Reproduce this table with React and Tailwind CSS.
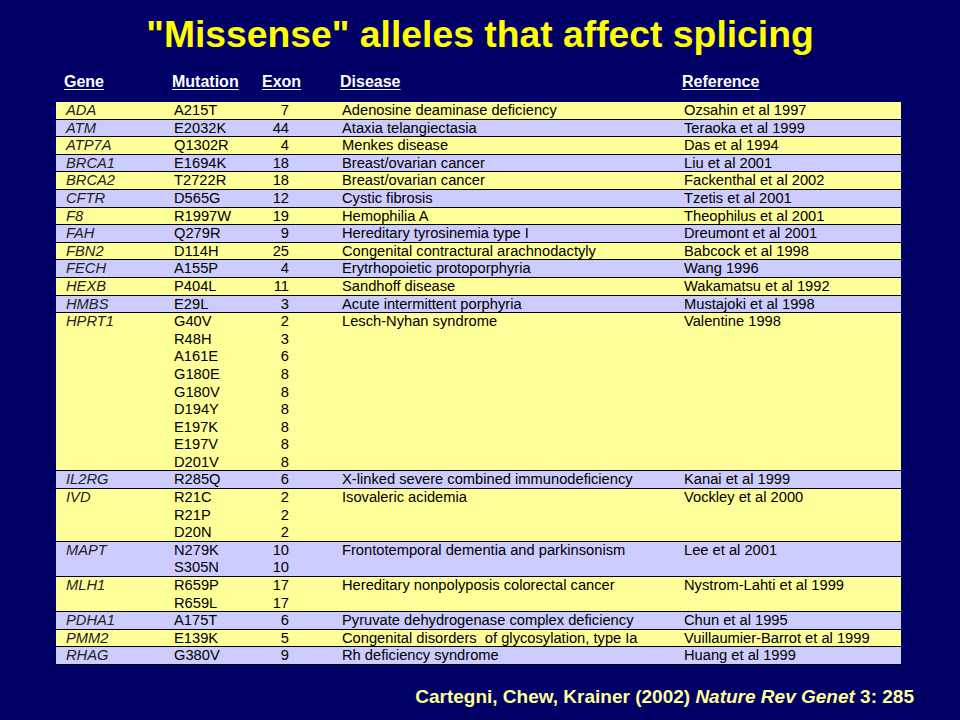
const rows = [
  { gene: 'ADA', muts: [['A215T', '7']], disease: 'Adenosine deaminase deficiency', ref: 'Ozsahin et al 1997' },
  { gene: 'ATM', muts: [['E2032K', '44']], disease: 'Ataxia telangiectasia', ref: 'Teraoka et al 1999' },
  { gene: 'ATP7A', muts: [['Q1302R', '4']], disease: 'Menkes disease', ref: 'Das et al 1994' },
  { gene: 'BRCA1', muts: [['E1694K', '18']], disease: 'Breast/ovarian cancer', ref: 'Liu et al 2001' },
  { gene: 'BRCA2', muts: [['T2722R', '18']], disease: 'Breast/ovarian cancer', ref: 'Fackenthal et al 2002' },
  { gene: 'CFTR', muts: [['D565G', '12']], disease: 'Cystic fibrosis', ref: 'Tzetis et al 2001' },
  { gene: 'F8', muts: [['R1997W', '19']], disease: 'Hemophilia A', ref: 'Theophilus et al 2001' },
  { gene: 'FAH', muts: [['Q279R', '9']], disease: 'Hereditary tyrosinemia type I', ref: 'Dreumont et al 2001' },
  { gene: 'FBN2', muts: [['D114H', '25']], disease: 'Congenital contractural arachnodactyly', ref: 'Babcock et al 1998' },
  { gene: 'FECH', muts: [['A155P', '4']], disease: 'Erytrhopoietic protoporphyria', ref: 'Wang 1996' },
  { gene: 'HEXB', muts: [['P404L', '11']], disease: 'Sandhoff disease', ref: 'Wakamatsu et al 1992' },
  { gene: 'HMBS', muts: [['E29L', '3']], disease: 'Acute intermittent porphyria', ref: 'Mustajoki et al 1998' },
  {
    gene: 'HPRT1',
    muts: [
      ['G40V', '2'],
      ['R48H', '3'],
      ['A161E', '6'],
      ['G180E', '8'],
      ['G180V', '8'],
      ['D194Y', '8'],
      ['E197K', '8'],
      ['E197V', '8'],
      ['D201V', '8'],
    ],
    disease: 'Lesch-Nyhan syndrome',
    ref: 'Valentine 1998',
  },
  { gene: 'IL2RG', muts: [['R285Q', '6']], disease: 'X-linked severe combined immunodeficiency', ref: 'Kanai et al 1999' },
  {
    gene: 'IVD',
    muts: [
      ['R21C', '2'],
      ['R21P', '2'],
      ['D20N', '2'],
    ],
    disease: 'Isovaleric acidemia',
    ref: 'Vockley et al 2000',
  },
  {
    gene: 'MAPT',
    muts: [
      ['N279K', '10'],
      ['S305N', '10'],
    ],
    disease: 'Frontotemporal dementia and parkinsonism',
    ref: 'Lee et al 2001',
  },
  {
    gene: 'MLH1',
    muts: [
      ['R659P', '17'],
      ['R659L', '17'],
    ],
    disease: 'Hereditary nonpolyposis colorectal cancer',
    ref: 'Nystrom-Lahti et al 1999',
  },
  { gene: 'PDHA1', muts: [['A175T', '6']], disease: 'Pyruvate dehydrogenase complex deficiency', ref: 'Chun et al 1995' },
  { gene: 'PMM2', muts: [['E139K', '5']], disease: 'Congenital disorders  of glycosylation, type Ia', ref: 'Vuillaumier-Barrot et al 1999' },
  { gene: 'RHAG', muts: [['G380V', '9']], disease: 'Rh deficiency syndrome', ref: 'Huang et al 1999' },
];

export default function App() {
  return (
    <div className="w-[960px] h-[720px] bg-[#000066] font-['Liberation_Sans',Arial,sans-serif] overflow-hidden">
      <h1 className="pt-[16px] text-center text-[37.3px] leading-[37px] font-bold text-[#ffff00]">
        "Missense" alleles that affect splicing
      </h1>

      {/* column headings sit on the navy, a touch left of the body text */}
      <div className="mt-[20px] ml-[64px] grid grid-cols-[108px_90px_78px_342px_1fr] text-[16px] leading-[18px] font-bold text-white">
        <span className="underline underline-offset-2">Gene</span>
        <span className="underline underline-offset-2">Mutation</span>
        <span className="underline underline-offset-2">Exon</span>
        <span className="underline underline-offset-2">Disease</span>
        <span className="underline underline-offset-2">Reference</span>
      </div>

      <div className="mt-[11px] ml-[56px] w-[845px] text-[14.7px] leading-[17.6px] text-black">
        {rows.map((r, i) => (
          <div
            key={r.gene}
            className={`grid grid-cols-[118px_75px_40px_395px_217px] shadow-[inset_0_-1px_0_#000] ${
              i % 2 === 0 ? 'bg-[#ffff99]' : 'bg-[#ccccff]'
            }`}
          >
            <span className="pl-[10px] italic text-[#222]">{r.gene}</span>
            <div>
              {r.muts.map(([m]) => (
                <div key={m}>{m}</div>
              ))}
            </div>
            <div className="text-right">
              {r.muts.map(([m, e]) => (
                <div key={m}>{e}</div>
              ))}
            </div>
            <span className="pl-[53px] whitespace-pre">{r.disease}</span>
            <span>{r.ref}</span>
          </div>
        ))}
      </div>

      <p className="mt-[21px] pr-[46px] text-right text-[19px] leading-[22px] font-bold text-[#ffff99]">
        Cartegni, Chew, Krainer (2002) <i>Nature Rev Genet</i> 3: 285
      </p>
    </div>
  );
}
